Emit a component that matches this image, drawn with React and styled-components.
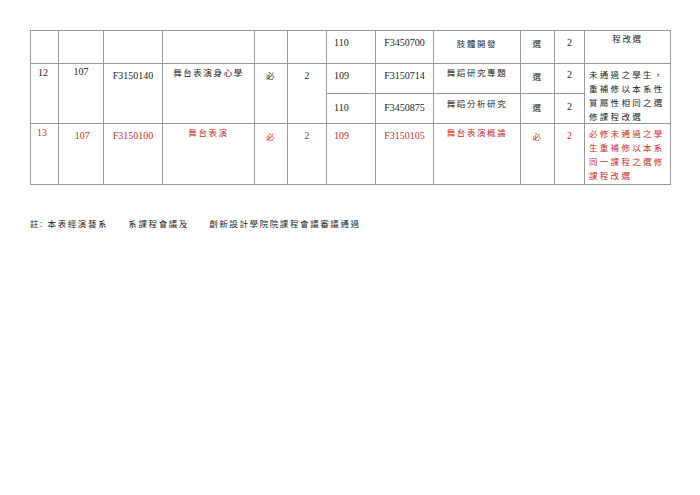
import React from "react";
import styled, { createGlobalStyle } from "styled-components";

const GlobalStyle = createGlobalStyle`
  html, body {
    margin: 0;
    padding: 0;
    background: #ffffff;
  }
`;

const Page = styled.div`
  width: 700px;
  height: 495px;
  box-sizing: border-box;
  padding: 30px 30px 0 30px;
  font-family: "Liberation Serif", "Noto Sans CJK TC", serif;
  color: #1f1f1f;
`;

const Table = styled.table`
  width: 640px;
  border-collapse: collapse;
  table-layout: fixed;
`;

const Row = styled.tr`
  height: ${(p) => p.h}px;
  color: ${(p) => (p.red ? "#c9302c" : "#1f1f1f")};
`;

const Cell = styled.td`
  border: 1px solid #9a9a9a;
  vertical-align: top;
  padding-top: ${(p) => p.top ?? 6}px;
  padding-bottom: 0;
  padding-left: ${(p) => (p.align === "left" ? p.pl ?? 7 : 2)}px;
  padding-right: 2px;
  text-align: ${(p) => p.align || "center"};
  font-size: 10px;
  line-height: 12px;
  white-space: nowrap;
  overflow: hidden;
`;

const Han = styled.span`
  font-family: "Noto Sans CJK TC", sans-serif;
  font-size: 8.5px;
  letter-spacing: 1.6px;
  line-height: 12px;
`;

const NoteLines = styled.div`
  font-family: "Noto Sans CJK TC", sans-serif;
  font-size: 8.5px;
  letter-spacing: 2.3px;
  line-height: 14px;
  text-align: left;
`;

const Footnote = styled.div`
  margin-top: 32px;
  font-family: "Noto Sans CJK TC", sans-serif;
  font-size: 8.5px;
  letter-spacing: 1.6px;
  color: #1f1f1f;
  white-space: pre;
`;

const widths = [28, 45, 59, 92, 33, 39, 49, 58, 87, 34, 30, 86];

export default function App() {
  return (
    <>
      <GlobalStyle />
      <Page>
        <Table>
          <colgroup>
            {widths.map((w, i) => (
              <col key={i} style={{ width: w }} />
            ))}
          </colgroup>
          <tbody>
            <Row h={33}>
              <Cell />
              <Cell />
              <Cell />
              <Cell />
              <Cell />
              <Cell />
              <Cell align="left" top={6}>110</Cell>
              <Cell top={6}>F3450700</Cell>
              <Cell top={6}><Han>肢體開發</Han></Cell>
              <Cell top={6}><Han>選</Han></Cell>
              <Cell top={6}>2</Cell>
              <Cell top={1}><Han>程改選</Han></Cell>
            </Row>
            <Row h={30}>
              <Cell rowSpan={2} align="left" top={3}>12</Cell>
              <Cell rowSpan={2} top={2}>107</Cell>
              <Cell rowSpan={2} top={6}>F3150140</Cell>
              <Cell rowSpan={2} top={2}><Han>舞台表演身心學</Han></Cell>
              <Cell rowSpan={2} top={5}><Han>必</Han></Cell>
              <Cell rowSpan={2} top={6}>2</Cell>
              <Cell align="left" top={6}>109</Cell>
              <Cell top={6}>F3150714</Cell>
              <Cell top={2}><Han>舞蹈研究專題</Han></Cell>
              <Cell top={6}><Han>選</Han></Cell>
              <Cell top={5}>2</Cell>
              <Cell rowSpan={2} align="left" pl={4} top={3}>
                <NoteLines>
                  未通過之學生，
                  <br />
                  重補修以本系性
                  <br />
                  質屬性相同之選
                  <br />
                  修課程改選
                </NoteLines>
              </Cell>
            </Row>
            <Row h={30}>
              <Cell align="left" top={8}>110</Cell>
              <Cell top={8}>F3450875</Cell>
              <Cell top={3}><Han>舞蹈分析研究</Han></Cell>
              <Cell top={7}><Han>選</Han></Cell>
              <Cell top={7}>2</Cell>
            </Row>
            <Row h={61} red>
              <Cell align="left" pl={6} top={3}>13</Cell>
              <Cell top={6}>&nbsp;107</Cell>
              <Cell top={6}>F3150100</Cell>
              <Cell top={2}><Han>舞台表演</Han></Cell>
              <Cell top={6}><Han>必</Han></Cell>
              <Cell top={6}>2</Cell>
              <Cell align="left" top={6}>109</Cell>
              <Cell top={6}>F3150105</Cell>
              <Cell top={2}><Han>舞台表演概論</Han></Cell>
              <Cell top={6}><Han>必</Han></Cell>
              <Cell top={6}>2</Cell>
              <Cell align="left" pl={4} top={2}>
                <NoteLines>
                  必修未通過之學
                  <br />
                  生重補修以本系
                  <br />
                  同一課程之選修
                  <br />
                  課程改選
                </NoteLines>
              </Cell>
            </Row>
          </tbody>
        </Table>
        <Footnote>{"註: 本表經演藝系　　系課程會議及　　創新設計學院院課程會議審議通過"}</Footnote>
      </Page>
    </>
  );
}
